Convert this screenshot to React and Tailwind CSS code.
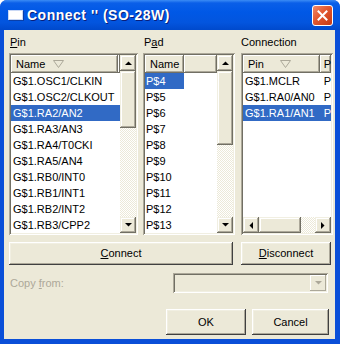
import React from 'react';

const font = "font-['Liberation_Sans',Arial,sans-serif]";
const sunken =
  'p-[2px] shadow-[inset_1px_1px_#ACA899,inset_-1px_-1px_#fff,inset_2px_2px_#716F64,inset_-2px_-2px_#F1EFE2]';
const raised =
  'bg-[#ECE9D8] shadow-[inset_-1px_-1px_#716F64,inset_1px_1px_#F1EFE2,inset_-2px_-2px_#ACA899,inset_2px_2px_#fff]';
const headerCell =
  'bg-[#ECE9D8] shadow-[inset_-1px_-1px_#716F64,inset_1px_1px_#fff,inset_-2px_-2px_#ACA899]';
const checker =
  'bg-[repeating-conic-gradient(#fff_0%_25%,#ECE9D8_0%_50%)] bg-[length:2px_2px]';
const button =
  'bg-[#ECE9D8] shadow-[inset_-1px_-1px_#404040,inset_1px_1px_#fff,inset_-2px_-2px_#ACA899,inset_2px_2px_#F1EFE2]';

const pins = [
  'G$1.OSC1/CLKIN',
  'G$1.OSC2/CLKOUT',
  'G$1.RA2/AN2',
  'G$1.RA3/AN3',
  'G$1.RA4/T0CKI',
  'G$1.RA5/AN4',
  'G$1.RB0/INT0',
  'G$1.RB1/INT1',
  'G$1.RB2/INT2',
  'G$1.RB3/CPP2',
];
const pads = ['P$4', 'P$5', 'P$6', 'P$7', 'P$8', 'P$9', 'P$10', 'P$11', 'P$12', 'P$13'];
const connections = ['G$1.MCLR', 'G$1.RA0/AN0', 'G$1.RA1/AN1'];

const Arrow = ({ dir, color = '#000' }) => {
  const pts = {
    up: '0,4 7,4 3.5,0.5',
    down: '0,0 7,0 3.5,3.5',
    left: '4,0 4,7 0.5,3.5',
    right: '0,0 0,7 3.5,3.5',
  }[dir];
  const vertical = dir === 'up' || dir === 'down';
  return (
    <svg width={vertical ? 7 : 4} height={vertical ? 4 : 7} viewBox={vertical ? '0 0 7 4' : '0 0 4 7'}>
      <polygon points={pts} fill={color} />
    </svg>
  );
};

const ArrowButton = ({ dir }) => (
  <div className={`w-[16px] h-[16px] shrink-0 flex items-center justify-center ${raised}`}>
    <Arrow dir={dir} />
  </div>
);

const SortMark = () => (
  <svg width="11" height="8" viewBox="0 0 11 8">
    <polygon points="0.5,0.5 10.5,0.5 5.5,7.5" fill="none" stroke="#ACA899" strokeWidth="1" />
  </svg>
);

const VScroll = ({ thumb }) => (
  <div className="w-[16px] h-full flex flex-col">
    <ArrowButton dir="up" />
    <div className={`shrink-0 ${raised}`} style={{ height: thumb }} />
    <div className={`flex-1 ${checker}`} />
    <ArrowButton dir="down" />
  </div>
);

const Underline = ({ children }) => <span className="underline underline-offset-[1px]">{children}</span>;

export default function App() {
  return (
    <div className={`w-[340px] h-[344px] flex flex-col rounded-t-[7px] overflow-hidden bg-[#0A4FD8] ${font}`}>
      {/* title bar */}
      <div className="h-[30px] shrink-0 flex items-center pl-[8px] pr-[7px] bg-[linear-gradient(to_bottom,#3B8CF5_0%,#0A5FE8_10%,#0058E6_40%,#0355DE_75%,#0049CC_100%)]">
        <div className="w-[15px] h-[10px] bg-white border border-[#C9D8F5] shadow-[1px_1px_0_#0A3FA8]" />
        <span className="ml-[4px] text-white font-bold text-[14px] leading-none tracking-[0.5px] [text-shadow:1px_1px_#0A1E7A]">
          Connect '' (SO-28W)
        </span>
        <div className="ml-auto w-[21px] h-[21px] rounded-[3px] border border-white flex items-center justify-center bg-[linear-gradient(135deg,#F08A6A_0%,#E2572F_45%,#C63A14_100%)]">
          <svg width="11" height="11" viewBox="0 0 11 11">
            <path d="M1.5 1.5 L9.5 9.5 M9.5 1.5 L1.5 9.5" stroke="#fff" strokeWidth="2" strokeLinecap="square" />
          </svg>
        </div>
      </div>

      {/* body */}
      <div className="flex-1 ml-[4px] mr-[5px] mb-[5px] bg-[#ECE9D8] text-[11px] text-black flex flex-col pl-[5px]">
        {/* labels */}
        <div className="h-[23px] shrink-0 flex pt-[6px] leading-[13px]">
          <div className="w-[134px] pl-[1px]">
            <Underline>P</Underline>in
          </div>
          <div className="w-[98px] pl-[1px]">
            P<Underline>a</Underline>d
          </div>
          <div>Connection</div>
        </div>

        {/* list boxes */}
        <div className="h-[182px] shrink-0 flex">
          {/* Pin */}
          <div className={`w-[129px] h-full bg-white ${sunken}`}>
            <div className="h-full flex">
              <div className="flex-1 flex flex-col">
                <div className="h-[18px] shrink-0 flex">
                  <div className={`w-[107px] h-full flex items-center pl-[5px] gap-[8px] ${headerCell}`}>
                    <span>Name</span>
                    <SortMark />
                  </div>
                  <div className={`flex-1 ${headerCell}`} />
                </div>
                {pins.map((p, i) => (
                  <div
                    key={p}
                    className={`h-[16px] leading-[16px] pl-[2px] whitespace-nowrap ${
                      i === 2 ? 'bg-[#316AC5] text-white' : ''
                    }`}
                  >
                    {p}
                  </div>
                ))}
              </div>
              <VScroll thumb={57} />
            </div>
          </div>

          {/* Pad */}
          <div className={`ml-[5px] w-[92px] h-full bg-white ${sunken}`}>
            <div className="h-full flex">
              <div className="flex-1 flex flex-col">
                <div className="h-[18px] shrink-0 flex">
                  <div className={`w-[39px] h-full flex items-center pl-[5px] ${headerCell}`}>Name</div>
                  <div className={`flex-1 ${headerCell}`} />
                </div>
                {pads.map((p, i) => (
                  <div key={p} className="h-[16px] leading-[16px] flex">
                    <div className={`w-[39px] pl-[1px] ${i === 0 ? 'bg-[#316AC5] text-white' : ''}`}>{p}</div>
                  </div>
                ))}
              </div>
              <VScroll thumb={74} />
            </div>
          </div>

          {/* Connection */}
          <div className={`ml-[6px] w-[92px] h-full bg-white ${sunken}`}>
            <div className="h-full flex flex-col">
              <div className="h-[18px] shrink-0 flex">
                <div className={`w-[79px] h-full flex items-center pl-[5px] gap-[16px] ${headerCell}`}>
                  <span>Pin</span>
                  <SortMark />
                </div>
                <div className={`flex-1 h-full pl-[4px] flex items-center ${headerCell}`}>P</div>
              </div>
              <div className="flex-1 flex flex-col">
                {connections.map((c, i) => (
                  <div
                    key={c}
                    className={`h-[16px] leading-[16px] flex whitespace-nowrap ${
                      i === 2 ? 'bg-[#316AC5] text-white' : ''
                    }`}
                  >
                    <div className="w-[79px] pl-[2px]">{c}</div>
                    <div className="pl-[3px]">P</div>
                  </div>
                ))}
              </div>
              <div className="h-[16px] shrink-0 flex">
                <ArrowButton dir="left" />
                <div className={`w-[42px] h-full ${raised}`} />
                <div className={`flex-1 ${checker}`} />
                <ArrowButton dir="right" />
              </div>
            </div>
          </div>
        </div>

        {/* connect buttons */}
        <div className="mt-[7px] h-[23px] shrink-0 flex">
          <button className={`w-[224px] h-full ${button}`}>
            <Underline>C</Underline>onnect
          </button>
          <button className={`ml-[8px] w-[90px] h-full ${button}`}>
            <Underline>D</Underline>isconnect
          </button>
        </div>

        {/* copy from */}
        <div className="mt-[8px] h-[20px] shrink-0 flex items-center">
          <div className="w-[164px] pl-[1px] text-[#ACA899]">
            Copy <Underline>f</Underline>rom:
          </div>
          <div className={`w-[155px] h-full flex justify-end ${sunken}`}>
            <div className="w-[16px] h-full flex items-center justify-center bg-[#ECE9D8] shadow-[inset_-1px_-1px_#ACA899,inset_1px_1px_#fff]">
              <Arrow dir="down" color="#ACA899" />
            </div>
          </div>
        </div>

        {/* ok / cancel */}
        <div className="mt-[16px] h-[26px] shrink-0 flex pl-[157px]">
          <button className={`w-[80px] h-full ${button}`}>OK</button>
          <button className={`ml-[6px] w-[77px] h-full ${button}`}>Cancel</button>
        </div>
      </div>
    </div>
  );
}
